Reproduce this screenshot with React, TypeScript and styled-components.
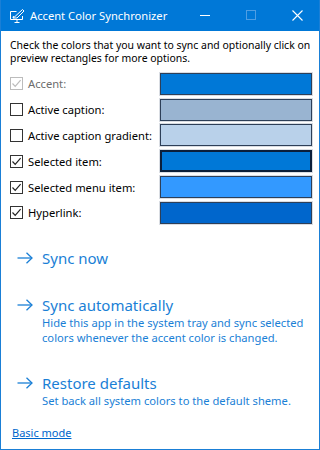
import React from 'react';
import styled, { createGlobalStyle } from 'styled-components';

const GlobalStyle = createGlobalStyle`
  html, body {
    margin: 0;
    padding: 0;
    background: #ffffff;
  }
  * {
    box-sizing: border-box;
  }
`;

type ColorItem = {
  label: string;
  color: string;
  checked: boolean;
  disabled?: boolean;
  selected?: boolean;
};

const items: ColorItem[] = [
  { label: 'Accent:', color: '#0078d7', checked: true, disabled: true },
  { label: 'Active caption:', color: '#99b4d1', checked: false },
  { label: 'Active caption gradient:', color: '#b9d1ea', checked: false },
  { label: 'Selected item:', color: '#0078d7', checked: true, selected: true },
  { label: 'Selected menu item:', color: '#3399ff', checked: true },
  { label: 'Hyperlink:', color: '#0066cc', checked: true },
];

function AppIcon() {
  return (
    <svg width="17" height="16" viewBox="0 0 17 16" fill="none" stroke="#ffffff" strokeWidth="1">
      <path d="M7.5 3.5H1.5V11.5H13.5V8" />
      <path d="M5.5 14.5H10.5M8 11.5V14.5" />
      <path d="M4 10L6 8.5L13.5 1.5L15 3L8 10Z" />
      <path d="M4 10L4.5 8" />
    </svg>
  );
}

function Arrow() {
  return (
    <svg width="16" height="12" viewBox="0 0 16 12" fill="none" stroke="#1a7fd6" strokeWidth="1.3">
      <path d="M0.5 6H15" />
      <path d="M9.5 0.7L15 6L9.5 11.3" />
    </svg>
  );
}

function CheckBox({ checked, disabled }: { checked: boolean; disabled?: boolean }) {
  return (
    <Box $disabled={disabled}>
      {checked && (
        <svg width="11" height="11" viewBox="0 0 11 11" fill="none" stroke={disabled ? '#bcbcbc' : '#222222'} strokeWidth="1.2">
          <path d="M1.5 5.5L4.2 8.3L9.6 2.2" />
        </svg>
      )}
    </Box>
  );
}

function Command({ title, desc }: { title: string; desc?: string[] }) {
  return (
    <CommandWrap>
      <CommandHead>
        <Arrow />
        <CommandTitle>{title}</CommandTitle>
      </CommandHead>
      {desc && (
        <CommandDesc>
          {desc.map((line) => (
            <div key={line}>{line}</div>
          ))}
        </CommandDesc>
      )}
    </CommandWrap>
  );
}

export default function App() {
  return (
    <>
      <GlobalStyle />
      <Window>
        <TitleBar>
          <IconSlot>
            <AppIcon />
          </IconSlot>
          <Title>Accent Color Synchronizer</Title>
          <CaptionButton>
            <svg width="11" height="11" viewBox="0 0 11 11" stroke="#ffffff" strokeWidth="1">
              <path d="M0 5.5H10" />
            </svg>
          </CaptionButton>
          <CaptionButton>
            <svg width="11" height="11" viewBox="0 0 11 11" fill="none" stroke="#4f9ee3" strokeWidth="1">
              <rect x="0.5" y="0.5" width="9" height="9" />
            </svg>
          </CaptionButton>
          <CaptionButton>
            <svg width="11" height="11" viewBox="0 0 11 11" stroke="#ffffff" strokeWidth="1.1">
              <path d="M0.5 0.5L10.5 10.5M10.5 0.5L0.5 10.5" />
            </svg>
          </CaptionButton>
        </TitleBar>
        <Body>
          <Intro>
            <div>Check the colors that you want to sync and optionally click on</div>
            <div>preview rectangles for more options.</div>
          </Intro>
          <List>
            {items.map((item) => (
              <Row key={item.label}>
                <CheckBox checked={item.checked} disabled={item.disabled} />
                <Label $disabled={item.disabled}>{item.label}</Label>
                <Swatch $color={item.color} $selected={item.selected} />
              </Row>
            ))}
          </List>
          <Commands>
            <Command title="Sync now" />
            <Command
              title="Sync automatically"
              desc={[
                'Hide this app in the system tray and sync selected',
                'colors whenever the accent color is changed.',
              ]}
            />
            <Command title="Restore defaults" desc={['Set back all system colors to the default sheme.']} />
          </Commands>
          <BasicLink>Basic mode</BasicLink>
        </Body>
      </Window>
    </>
  );
}

const Window = styled.div`
  width: 320px;
  height: 450px;
  display: flex;
  flex-direction: column;
  border: 1px solid #1a7fd6;
  border-top: none;
  background: #ffffff;
  font-family: 'Noto Sans', 'Open Sans', sans-serif;
  color: #000000;
  overflow: hidden;
`;

const TitleBar = styled.div`
  height: 31px;
  margin: 0 -1px;
  display: flex;
  align-items: center;
  background: #0078d7;
  color: #ffffff;
  flex-shrink: 0;
`;

const IconSlot = styled.div`
  width: 17px;
  height: 16px;
  margin-left: 9px;
  display: flex;
`;

const Title = styled.div`
  flex: 1;
  margin-left: 4px;
  font-size: 11.2px;
`;

const CaptionButton = styled.div`
  width: 46px;
  height: 31px;
  display: flex;
  align-items: center;
  justify-content: center;
`;

const Body = styled.div`
  flex: 1;
  display: flex;
  flex-direction: column;
  padding: 0 7px 0 9px;
`;

const Intro = styled.div`
  margin-top: 8px;
  font-size: 10.45px;
  line-height: 13px;
  white-space: nowrap;
`;

const List = styled.div`
  margin-top: 6px;
  display: flex;
  flex-direction: column;
`;

const Row = styled.div`
  height: 25.8px;
  display: flex;
  align-items: center;
`;

const Box = styled.div<{ $disabled?: boolean }>`
  width: 13px;
  height: 13px;
  border: 1px solid ${(p) => (p.$disabled ? '#bcbcbc' : '#333333')};
  display: flex;
  align-items: center;
  justify-content: center;
  flex-shrink: 0;
`;

const Label = styled.div<{ $disabled?: boolean }>`
  flex: 1;
  margin-left: 5px;
  font-size: 11.2px;
  color: ${(p) => (p.$disabled ? '#6d6d6d' : '#000000')};
`;

const Swatch = styled.div<{ $color: string; $selected?: boolean }>`
  width: 152px;
  height: 22px;
  background: ${(p) => p.$color};
  border: ${(p) => (p.$selected ? '2px solid #0b1f3a' : '1px solid #2d3f58')};
  box-shadow: 0 0 0 1px #d9dde3;
`;

const Commands = styled.div`
  margin-top: 22px;
  display: flex;
  flex-direction: column;
  gap: 27.5px;
  padding-left: 7px;
`;

const CommandWrap = styled.div`
  display: flex;
  flex-direction: column;
`;

const CommandHead = styled.div`
  height: 20px;
  display: flex;
  align-items: center;
  gap: 9px;
`;

const CommandTitle = styled.div`
  font-size: 15px;
  color: #1a7fd6;
`;

const CommandDesc = styled.div`
  padding-left: 25px;
  font-size: 11.2px;
  line-height: 15px;
  color: #1a7fd6;
`;

const BasicLink = styled.a`
  margin-top: auto;
  margin-bottom: 9px;
  margin-left: 2px;
  font-size: 11px;
  color: #0066cc;
  text-decoration: underline;
  cursor: pointer;
`;
